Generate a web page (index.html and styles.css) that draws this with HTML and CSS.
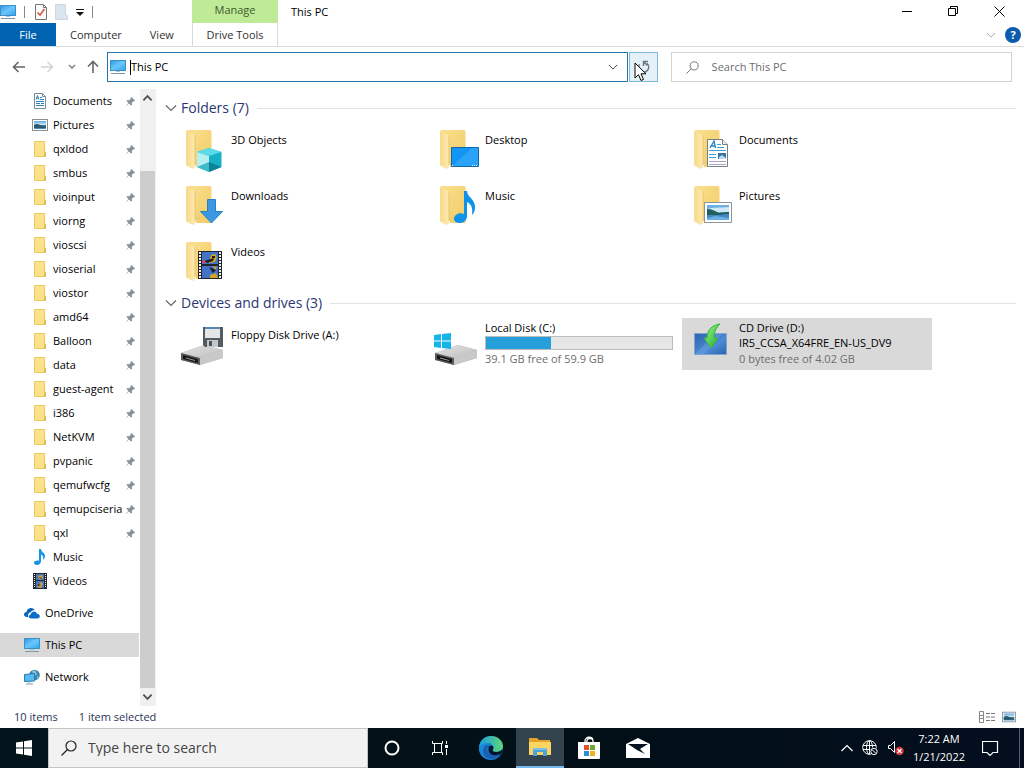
FILE: index.html
```html
<!DOCTYPE html>
<html lang="en">
<head>
    <meta charset="UTF-8">
    <meta name="viewport" content="width=device-width, initial-scale=1.0">
    <title>This PC</title>
    <link rel="stylesheet" href="styles.css">
</head>
<body>
    <svg class="sprite" aria-hidden="true">
        <defs>
            <linearGradient id="screen" x1="0" y1="0" x2="1" y2="1">
                <stop offset="0" stop-color="#2b9ae6"/><stop offset=".5" stop-color="#6cc6fb"/><stop offset="1" stop-color="#2ba4f0"/>
            </linearGradient>
            <linearGradient id="yellow" x1="0" y1="0" x2="1" y2="1">
                <stop offset="0" stop-color="#fbe08e"/><stop offset="1" stop-color="#f1cb68"/>
            </linearGradient>
            <linearGradient id="flap" x1="0" y1="0" x2="1" y2="0">
                <stop offset="0" stop-color="#f7da88"/><stop offset="1" stop-color="#fdeab4"/>
            </linearGradient>
            <linearGradient id="photo" x1="0" y1="0" x2="0" y2="1">
                <stop offset="0" stop-color="#5ba6e0"/><stop offset=".5" stop-color="#d9effa"/><stop offset=".55" stop-color="#3d7480"/><stop offset="1" stop-color="#4d94c8"/>
            </linearGradient>
            <linearGradient id="metal" x1="0" y1="0" x2="1" y2="1">
                <stop offset="0" stop-color="#e4e4e4"/><stop offset="1" stop-color="#bdbdbd"/>
            </linearGradient>
            <linearGradient id="edgeTop" x1="0" y1="0" x2="1" y2="0">
                <stop offset="0" stop-color="#1c9de0"/><stop offset="1" stop-color="#5ed67a"/>
            </linearGradient>
            <linearGradient id="cdBox" x1="0" y1="0" x2="1" y2="1">
                <stop offset="0" stop-color="#2d62b0"/><stop offset=".6" stop-color="#4c8bd4"/><stop offset="1" stop-color="#2a62ae"/>
            </linearGradient>
            <linearGradient id="green" x1="0" y1="0" x2="1" y2="1">
                <stop offset="0" stop-color="#a5f58f"/><stop offset="1" stop-color="#17ad2a"/>
            </linearGradient>
        </defs>
        <symbol id="pc" viewBox="0 0 16 16">
            <rect x=".5" y="1.5" width="15" height="10" fill="url(#screen)" stroke="#3d8fc4"/>
            <path d="M6 12h4v1H6z" fill="#9dc8e4"/>
            <path d="M1 14.5h14" stroke="#7b97a8"/>
        </symbol>
        <symbol id="folder" viewBox="0 0 16 16">
            <path d="M2.5.5h10v10l1 1v4h-11z" fill="#fde08a" stroke="#ecc95f"/>
            <path d="M12 10v5.500h2V11z" fill="#e3b94e"/>
        </symbol>
        <symbol id="pin" viewBox="0 0 12 12">
            <path d="M7 1l4 4-1 1-.8-.3L7.500 7.500l.2 2-1 1-2.400-2.400L1 11l-.2-.2L3.700 7.500 1.500 5.300l1-1 2 .2 1.800-1.700L6 2z" fill="#87939a"/>
        </symbol>
        <symbol id="doc" viewBox="0 0 16 16">
            <path d="M2.500.5h8l3 3v12h-11z" fill="#fff" stroke="#7e8a92"/>
            <path d="M10.500.5v3h3" fill="none" stroke="#7e8a92"/>
            <path d="M4 6.500l1.500-4L7 6.500M4.500 5h2M8 4.500h2M8 6.500h4M4 8.500h8M4 10.500h4M9 10.500h3M4 12.500h8" fill="none" stroke="#2b82bd"/>
        </symbol>
        <symbol id="pic" viewBox="0 0 16 16">
            <rect x=".5" y="2.500" width="15" height="11" fill="#fff" stroke="#8a9096"/>
            <rect x="2" y="4" width="12" height="8" fill="url(#photo)"/>
            <path d="M2 8c3-2 5-1 7 1l5 1v1H2z" fill="#28576f"/>
        </symbol>
        <symbol id="note" viewBox="0 0 16 16">
            <path d="M7 0h2c0 3 4 4 4 7 0 2-1 3-2 4 1-4-1-5-2-5.500V12c0 2-1.500 4-4 4-2 0-3-1-3-2.200C2 12 5 11 7 11.800z" fill="#1593e6"/>
        </symbol>
        <symbol id="film" viewBox="0 0 16 16">
            <path d="M1 0h14v16H1z" fill="#262a30"/>
            <path d="M4 1h8v6H4zM4 8h8v7H4z" fill="#4b78bb"/>
            <path d="M6 3l4-1 1 3-3 2zM5 14l4-5 2 2-2 4z" fill="#c9a13a"/>
            <path d="M7 4l3 1-1 1zM6 11l3 1-3 1z" fill="#2c2c30"/>
            <path d="M2.500 1v14M13.500 1v14" stroke="#e6e6e6" stroke-dasharray="1 1"/>
        </symbol>
        <symbol id="cloud" viewBox="0 0 16 16">
            <path d="M3 12C1 12 0 11 0 9.500S1 7 2.500 7C3 4 5 3 7 3c2 0 3 1 3.600 2C9 5 7 6 6.500 7.500 4.500 7.500 3.500 10 4.500 12z" fill="#0a64b8"/>
            <path d="M7 13.500c-2.500 0-3-3.500-.2-4.300C7.500 6 12 5.500 13 8.800c3.500 0 3.800 4.700.5 4.700z" fill="#0a6fc9"/>
        </symbol>
        <symbol id="net" viewBox="0 0 16 16">
            <circle cx="10.500" cy="6" r="5.300" fill="#3a86ac"/>
            <path d="M8 1l4 1 1 4-4 1zM13 7l2 1-2 2z" fill="#86bfcf"/>
            <path d="M.5 5.500l10-1v7.500l-10 .5z" fill="#58baf2" stroke="#277db6"/>
            <path d="M5 12v2M2 15h7" stroke="#7d99a8"/>
        </symbol>
        <symbol id="folder-big" viewBox="0 0 48 48">
            <path d="M7 5h23q1.500 0 1.500 1.500V42H16z" fill="url(#yellow)"/>
            <path d="M6 5.500l9 4.500v31.500q0 3-3 2L7 41q-1-.5-1-2z" fill="url(#flap)"/>
            <path d="M15 10v30M15 38h4v-4" fill="none" stroke="#e8c56c"/>
        </symbol>
        <symbol id="drive" viewBox="0 0 48 48">
            <path d="M1 33l23-8 19 5v8L20 45 1 40z" fill="#aaa"/>
            <path d="M1 33l23-8 19 5-23 8z" fill="url(#metal)"/>
            <path d="M20 38l23-8v8l-23 7z" fill="#c9c9c9"/>
            <path d="M1 33l19 5v7L1 40z" fill="#5c5c5c"/>
            <path d="M3 35l15 4v4L3 39z" fill="#161616"/>
            <path d="M6 38l9 2.500" stroke="#999"/>
        </symbol>
        <symbol id="chev" viewBox="0 0 12 8">
            <path d="M1 1.500L6 6.500l5-5" fill="none" stroke="currentColor" stroke-width="1.200"/>
        </symbol>
        <symbol id="lens" viewBox="0 0 16 16">
            <circle cx="10" cy="6" r="5" fill="none" stroke="currentColor" stroke-width="1.200"/>
            <path d="M6.500 9.500L.5 15.500" stroke="currentColor" stroke-width="1.200"/>
        </symbol>
    </svg>

    <header class="ribbon">
        <div class="quick">
            <svg class="icon"><use href="#pc"/></svg>
            <span class="sep"></span>
            <button class="plain" aria-label="Properties"><svg width="12" height="16" viewBox="0 0 12 16"><path d="M.5.5h8l3 3v12H.5z" fill="#fbfbfb" stroke="#777"/><path d="M8.500.5v3h3" fill="none" stroke="#777"/><path d="M2.500 8.500L5 11l4.500-6" fill="none" stroke="#d8553e" stroke-width="1.600"/></svg></button>
            <button class="plain" aria-label="New folder"><svg width="13" height="16" viewBox="0 0 13 16"><path d="M.5.5h10v10l2 1v4H.5z" fill="#dbe5ee" stroke="#ccd7e1"/></svg></button>
            <button class="plain" aria-label="Customize toolbar"><svg width="8" height="8" viewBox="0 0 8 8"><path d="M0 1h8v1H0zM0 4h8L4 8z" fill="#111"/></svg></button>
            <span class="sep"></span>
        </div>
        <div class="manage">Manage</div>
        <div class="title">
            <span>This PC</span>
            <div class="controls">
                <button class="plain" aria-label="Minimize"><svg width="11" height="11"><path d="M0 5.500h10" stroke="#000"/></svg></button>
                <button class="plain" aria-label="Restore"><svg width="11" height="11"><path d="M.5 2.500h7v7h-7zM2.500 2V.5h7v7H8" fill="none" stroke="#000"/></svg></button>
                <button class="plain" aria-label="Close"><svg width="11" height="11"><path d="M.5.5l10 10M10.500.5l-10 10" stroke="#000"/></svg></button>
            </div>
        </div>
        <nav class="tabs">
            <button class="tab file">File</button>
            <button class="tab">Computer</button>
            <button class="tab">View</button>
        </nav>
        <button class="tab drive-tools">Drive Tools</button>
        <div class="help">
            <button class="plain" aria-label="Expand ribbon"><svg width="10" height="8"><use href="#chev"/></svg></button>
            <button class="help-button" aria-label="Help">?</button>
        </div>
    </header>

    <div class="navbar">
        <div class="arrows">
            <button class="plain" aria-label="Back"><svg width="14" height="12"><path d="M13 6H1.500M6.500 1l-5 5 5 5" fill="none" stroke="#666" stroke-width="1.600"/></svg></button>
            <button class="plain" aria-label="Forward"><svg width="14" height="12"><path d="M1 6h11.500M7.500 1l5 5-5 5" fill="none" stroke="#d2d2d2" stroke-width="1.400"/></svg></button>
            <button class="plain recent" aria-label="Recent locations"><svg width="8" height="6" viewBox="0 0 8 6"><path d="M1 1l3 3 3-3" fill="none" stroke="#888" stroke-width="1.600"/></svg></button>
            <button class="plain" aria-label="Up"><svg width="12" height="14"><path d="M6 13V1.500M1 6.500l5-5 5 5" fill="none" stroke="#666" stroke-width="1.600"/></svg></button>
        </div>
        <div class="address">
            <svg class="icon"><use href="#pc"/></svg>
            <span class="caret"></span>
            <input type="text" value="This PC" aria-label="Address">
            <button class="plain" aria-label="Previous locations"><svg width="10" height="8"><use href="#chev"/></svg></button>
        </div>
        <button class="refresh" aria-label="Refresh">
            <svg width="14" height="14"><path d="M11 3.300a5 5 0 1 1-7.500 1M7.500 6V1.500h4.500M7.500 1.500l4 4" fill="none" stroke="#6a7a84" stroke-width="1.500"/></svg>
            <svg class="cursor" width="13" height="20" viewBox="0 0 13 20"><path d="M1 1v15l3.500-3.300L7 18.500l2.500-1.100L7 11.800h5z" fill="#fff" stroke="#000"/></svg>
        </button>
        <div class="search">
            <svg width="13" height="13"><use href="#lens"/></svg>
            <input type="text" placeholder="Search This PC" aria-label="Search This PC">
        </div>
    </div>

    <div class="content">
        <nav class="sidebar">
            <div class="tree">
                <a href="#" class="pinned"><svg class="icon"><use href="#doc"/></svg><span>Documents</span><svg class="pin"><use href="#pin"/></svg></a>
                <a href="#" class="pinned"><svg class="icon"><use href="#pic"/></svg><span>Pictures</span><svg class="pin"><use href="#pin"/></svg></a>
                <a href="#" class="pinned"><svg class="icon"><use href="#folder"/></svg><span>qxldod</span><svg class="pin"><use href="#pin"/></svg></a>
                <a href="#" class="pinned"><svg class="icon"><use href="#folder"/></svg><span>smbus</span><svg class="pin"><use href="#pin"/></svg></a>
                <a href="#" class="pinned"><svg class="icon"><use href="#folder"/></svg><span>vioinput</span><svg class="pin"><use href="#pin"/></svg></a>
                <a href="#" class="pinned"><svg class="icon"><use href="#folder"/></svg><span>viorng</span><svg class="pin"><use href="#pin"/></svg></a>
                <a href="#" class="pinned"><svg class="icon"><use href="#folder"/></svg><span>vioscsi</span><svg class="pin"><use href="#pin"/></svg></a>
                <a href="#" class="pinned"><svg class="icon"><use href="#folder"/></svg><span>vioserial</span><svg class="pin"><use href="#pin"/></svg></a>
                <a href="#" class="pinned"><svg class="icon"><use href="#folder"/></svg><span>viostor</span><svg class="pin"><use href="#pin"/></svg></a>
                <a href="#" class="pinned"><svg class="icon"><use href="#folder"/></svg><span>amd64</span><svg class="pin"><use href="#pin"/></svg></a>
                <a href="#" class="pinned"><svg class="icon"><use href="#folder"/></svg><span>Balloon</span><svg class="pin"><use href="#pin"/></svg></a>
                <a href="#" class="pinned"><svg class="icon"><use href="#folder"/></svg><span>data</span><svg class="pin"><use href="#pin"/></svg></a>
                <a href="#" class="pinned"><svg class="icon"><use href="#folder"/></svg><span>guest-agent</span><svg class="pin"><use href="#pin"/></svg></a>
                <a href="#" class="pinned"><svg class="icon"><use href="#folder"/></svg><span>i386</span><svg class="pin"><use href="#pin"/></svg></a>
                <a href="#" class="pinned"><svg class="icon"><use href="#folder"/></svg><span>NetKVM</span><svg class="pin"><use href="#pin"/></svg></a>
                <a href="#" class="pinned"><svg class="icon"><use href="#folder"/></svg><span>pvpanic</span><svg class="pin"><use href="#pin"/></svg></a>
                <a href="#" class="pinned"><svg class="icon"><use href="#folder"/></svg><span>qemufwcfg</span><svg class="pin"><use href="#pin"/></svg></a>
                <a href="#" class="pinned"><svg class="icon"><use href="#folder"/></svg><span>qemupciseria</span><svg class="pin"><use href="#pin"/></svg></a>
                <a href="#" class="pinned"><svg class="icon"><use href="#folder"/></svg><span>qxl</span><svg class="pin"><use href="#pin"/></svg></a>
                <a href="#" class="pinned"><svg class="icon"><use href="#note"/></svg><span>Music</span></a>
                <a href="#" class="pinned"><svg class="icon"><use href="#film"/></svg><span>Videos</span></a>
                <a href="#" class="root"><svg class="icon"><use href="#cloud"/></svg><span>OneDrive</span></a>
                <a href="#" class="root selected"><svg class="icon"><use href="#pc"/></svg><span>This PC</span></a>
                <a href="#" class="root"><svg class="icon"><use href="#net"/></svg><span>Network</span></a>
            </div>
            <div class="scrollbar">
                <button class="plain" aria-label="Scroll up"><svg class="up" width="11" height="8" viewBox="0 0 12 8"><path d="M1.500 1.500L6 6l4.500-4.500" fill="none" stroke="#505050" stroke-width="2"/></svg></button>
                <div class="track"><div class="thumb"></div></div>
                <button class="plain" aria-label="Scroll down"><svg width="11" height="8" viewBox="0 0 12 8"><path d="M1.500 1.500L6 6l4.500-4.500" fill="none" stroke="#505050" stroke-width="2"/></svg></button>
            </div>
        </nav>

        <main class="files">
            <h2><svg width="12" height="8"><use href="#chev"/></svg>Folders (7)</h2>
            <div class="tiles">
                <a href="#" class="tile">
                    <svg viewBox="0 0 48 48"><use href="#folder-big"/><path d="M29 23l12.500 4v15L29 47l-12-5V27z" fill="#17b1c7"/><path d="M29 23l12.500 4L29 31l-12-4z" fill="#5adbe8"/><path d="M17 27l12 4v16l-12-5z" fill="#b4eff2"/><path d="M17 42l12-5v10z" fill="#3fbac8"/><path d="M29 37l12.500 5L29 47z" fill="#0c8397"/></svg>
                    <div class="info"><span>3D Objects</span></div>
                </a>
                <a href="#" class="tile">
                    <svg viewBox="0 0 48 48"><use href="#folder-big"/><path d="M17.500 22.500h27v19h-27z" fill="#1296f5" stroke="#1267a8"/><path d="M18 41L38 23h6v18z" fill="#2aa3f8"/><path d="M18 40.500h2M38 40.500h5" stroke="#e7f4ff" stroke-dasharray="1 1"/></svg>
                    <div class="info"><span>Desktop</span></div>
                </a>
                <a href="#" class="tile">
                    <svg viewBox="0 0 48 48"><use href="#folder-big"/><path d="M19.500 14.500h15l5 5v22h-20z" fill="#fff" stroke="#777f86"/><path d="M34.500 14.500v5h5" fill="#eee" stroke="#777f86"/><path d="M22 23l4-7 1.500 7M23.500 21h4" fill="none" stroke="#2387c4" stroke-width="1.300"/><path d="M29 19.500h4M29 22.500h7M21 25.500h17M21 29.500h7M21 32.500h7" stroke="#3b9fd0"/><path d="M21 36.500h17M21 39.500h17" stroke="#a8a4c8"/><path d="M30 28h8v6h-8z" fill="#3972a4"/><path d="M31 32l3-2 4 3v1h-7z" fill="#b8dced"/></svg>
                    <div class="info"><span>Documents</span></div>
                </a>
                <a href="#" class="tile">
                    <svg viewBox="0 0 48 48"><use href="#folder-big"/><path d="M27.500 18.500h8v12h7L31.500 42 20.500 30.500h7z" fill="#3c98e2" stroke="#2780c4"/></svg>
                    <div class="info"><span>Downloads</span></div>
                </a>
                <a href="#" class="tile">
                    <svg viewBox="0 0 48 48"><use href="#folder-big"/><path d="M30 10h3c0 6 8 8 8 16 0 4-1 6-3 8 1-8-1-11-5-13v14c0 4-3 7-7 7-3 0-6-1.500-6-4 0-4 5-7 10-5z" fill="#0f93ea"/></svg>
                    <div class="info"><span>Music</span></div>
                </a>
                <a href="#" class="tile">
                    <svg viewBox="0 0 48 48"><use href="#folder-big"/><path d="M16.500 21.500h27v20h-27z" fill="#fff" stroke="#8a949b"/><path d="M19 24h22v15H19z" fill="#6fb0e4"/><path d="M19 28c6-2 12-1 22-2v5H19z" fill="#cfe8f7"/><path d="M19 28c5 0 8 2 12 4 4-1 7-1 10-1v2c-8 1-15 2-22 1z" fill="#23605c"/><path d="M19 34c7 1 14 0 22-1v6H19z" fill="#3f86c4"/><path d="M19 37l9-2 13 2v2H19z" fill="#69aee4"/></svg>
                    <div class="info"><span>Pictures</span></div>
                </a>
                <a href="#" class="tile">
                    <svg viewBox="0 0 48 48"><use href="#folder-big"/><path d="M18 14h24v28H18z" fill="#23252b"/><path d="M22 15h16v12H22zM22 29h16v12H22z" fill="#4472c8"/><path d="M31 18l4-1 2 3-2 5-6 1zM30 38l6-2 2 5h-8zM33 29l4 1-2 3z" fill="#d5a521"/><path d="M24 24l10-3-1 3-6 2zM29 30l7 3-3 3zM32 19h3v2h-3z" fill="#1d1d22"/><path d="M22 24l3-1 1 3h-4z" fill="#c84a5a"/><path d="M20 15v27M40 15v27" stroke="#f1f1f1" stroke-width="2" stroke-dasharray="2 1"/></svg>
                    <div class="info"><span>Videos</span></div>
                </a>
            </div>

            <h2><svg width="12" height="8"><use href="#chev"/></svg>Devices and drives (3)</h2>
            <div class="tiles">
                <a href="#" class="tile">
                    <svg viewBox="0 0 48 48"><use href="#drive"/><path d="M23 7h20v20H25l-2-2z" fill="#535b63"/><path d="M25 8h15v10H25z" fill="#e4e6e8"/><path d="M25 7h15v2H25z" fill="#5a87b2"/><path d="M27 20h11v7H27z" fill="#c3c7cb"/><path d="M29 21h3v5h-3z" fill="#4b5259"/></svg>
                    <div class="info"><span>Floppy Disk Drive (A:)</span></div>
                </a>
                <a href="#" class="tile">
                    <svg viewBox="0 0 48 48"><use href="#drive"/><path d="M0 15l7-1v6.500H0zM8 14l9-1v7.500H8zM0 21.500h7V28l-7-1zM8 21.500h9V29l-9-1z" fill="#15b5e8"/></svg>
                    <div class="info full">
                        <span>Local Disk (C:)</span>
                        <div class="bar"><div class="used" style="width: 35%"></div></div>
                        <span class="gray">39.1 GB free of 59.9 GB</span>
                    </div>
                </a>
                <a href="#" class="tile selected">
                    <svg viewBox="0 0 48 48"><path d="M6.500 13.500h32v21h-32z" fill="url(#cdBox)" stroke="#7ea4cf"/><path d="M7 34l20-20h7L16 34z" fill="#75aae4" opacity=".4"/><path d="M32 4c-8 1-13 6-13 14h-3l7 10 7-10h-4c0-6 2-10 6-14z" fill="url(#green)" stroke="#37b53c"/></svg>
                    <div class="info full">
                        <span>CD Drive (D:)</span>
                        <span>IR5_CCSA_X64FRE_EN-US_DV9</span>
                        <span class="gray">0 bytes free of 4.02 GB</span>
                    </div>
                </a>
            </div>
        </main>
    </div>

    <footer class="status">
        <span>10 items</span>
        <span>1 item selected</span>
        <div class="views">
            <button class="plain" aria-label="Details view"><svg width="16" height="12"><path d="M.5.5h4v11h-4zM0 4.500h5M0 7.500h5" fill="none" stroke="#888"/><path d="M7 2.500h9M7 6h9M7 9.500h9" stroke="#777" stroke-dasharray="4 1"/></svg></button>
            <button class="plain" aria-label="Large icons view"><svg width="14" height="14"><use href="#pic"/></svg></button>
        </div>
    </footer>

    <div class="taskbar">
        <button class="task" aria-label="Start"><svg width="16" height="16"><path d="M0 2.500l7-1v6H0zM8 1.300L16 0v7.500H8zM0 8.500h7v6l-7-1zM8 8.500h8V16l-8-1.300z" fill="#fff"/></svg></button>
        <div class="task-search">
            <svg width="16" height="16"><use href="#lens"/></svg>
            <input type="text" placeholder="Type here to search" aria-label="Type here to search">
        </div>
        <button class="task" aria-label="Cortana"><svg width="16" height="16"><circle cx="8" cy="8" r="6.500" fill="none" stroke="#fff" stroke-width="2"/></svg></button>
        <button class="task" aria-label="Task View"><svg width="17" height="16"><path d="M.5 1v2.500h10V1M2.500 3.500v9M9.500 3.500v9M.5 15v-2.500h10V15M14.500 1v3M14.500 9v6" fill="none" stroke="#fff"/><path d="M13 5h3v3h-3z" fill="#fff"/></svg></button>
        <div class="apps">
            <button class="task" aria-label="Edge"><svg width="26" height="26" viewBox="0 0 26 26"><circle cx="13" cy="13" r="12" fill="#1673c7"/><path d="M1 14C1 5 7 1 13 1c7 0 12 5 12 10 0 4-3 6-7 6-3 0-4-1-3-2 2-3 0-6-4-6-5 0-9 2-10 5z" fill="url(#edgeTop)"/><path d="M1.500 12C4 8 11 7 14 9c-4 0-6 3-5 7 1 5 6 7 12 5-5 6-18 5-20-6z" fill="#1688d6"/><path d="M12 11c2-1 4 0 3 3-1 2 0 3 3 3s5-1 6.500-3c0 3-1 5-3 6.500-5 1.500-11-1-11-6 0-2 0-3 1.500-3.500z" fill="#06162a"/><path d="M9 14c0 6 7 8 13 5-3 6-9 6-13 4-5-3-5-10-1-13 1 0 2 0 3 .5-1 .5-2 1.500-2 3.500z" fill="#1b5fb4"/></svg></button>
            <button class="task active" aria-label="File Explorer"><svg width="24" height="20" viewBox="0 0 24 20"><path d="M1 1h8l2 2h11v15H1z" fill="#e4a42b"/><path d="M1 5h22v13H1z" fill="#fcd462"/><path d="M5 11h14v8h-4v-4H9v4H5z" fill="#4aa3d9"/><path d="M5 11h14v2H5z" fill="#7cc0e4"/></svg></button>
            <button class="task" aria-label="Microsoft Store"><svg width="24" height="24" viewBox="0 0 24 24"><path d="M8 7V5c0-5 8-5 8 0v2M10 6V4c1-2 5-2 6 0" fill="none" stroke="#fff" stroke-width="1.300"/><path d="M1 6h22v16q0 1-1 1H2q-1 0-1-1z" fill="#fff"/><path d="M7 9h5v5H7z" fill="#e4502c"/><path d="M13 9h5v5h-5z" fill="#70a72c"/><path d="M7 15h5v5H7z" fill="#2a8fd0"/><path d="M13 15h5v5h-5z" fill="#f1b51c"/></svg></button>
            <button class="task" aria-label="Mail"><svg width="24" height="20" viewBox="0 0 24 20"><path d="M0 6l12-6 12 6v14H0z" fill="#fff"/><path d="M2 6h20l-8 5 5 5-8-4z" fill="#051420"/></svg></button>
        </div>
        <div class="tray">
            <button class="plain" aria-label="Show hidden icons"><svg width="12" height="8" viewBox="0 0 12 8"><path d="M.5 7L6 1.500 11.500 7" fill="none" stroke="#fff" stroke-width="1.200"/></svg></button>
            <button class="plain" aria-label="Network: not connected"><svg width="17" height="16" viewBox="0 0 17 16"><g fill="none" stroke="#fff"><circle cx="7.500" cy="7.500" r="6.800"/><ellipse cx="7.500" cy="7.500" rx="3" ry="6.800"/><path d="M1 5.500h13M1 9.500h8M7.500 1v13"/></g><circle cx="12" cy="11.500" r="4.200" fill="#040e1c"/><circle cx="12" cy="11.500" r="3.200" fill="none" stroke="#fff"/><path d="M10 9.500l4 4" stroke="#fff"/></svg></button>
            <button class="plain" aria-label="Volume: unavailable"><svg width="16" height="16" viewBox="0 0 16 16"><path d="M.5 5.500h2l4-4v11l-4-4h-2z" fill="none" stroke="#fff"/><circle cx="11.500" cy="11" r="4.300" fill="#d0343c"/><path d="M9.500 9l4 4M13.500 9l-4 4" stroke="#fff" stroke-width="1.200"/></svg></button>
            <div class="clock"><span>7:22 AM</span><span>1/21/2022</span></div>
            <button class="plain" aria-label="Notifications"><svg width="17" height="17" viewBox="0 0 17 17"><path d="M.5 1.500h15v11H11l-3 3-3-3H.5z" fill="none" stroke="#fff" stroke-width="1.200"/></svg></button>
        </div>
        <button class="show-desktop" aria-label="Show desktop"></button>
    </div>
</body>
</html>
```
FILE: styles.css
```css
* {
    box-sizing: border-box;
}
body {
    margin: 0;
    height: 100vh;
    display: flex;
    flex-direction: column;
    overflow: hidden;
    background: #fff;
    color: #000;
    font-family: "Open Sans", "Noto Sans", sans-serif;
    font-size: 11px;
    line-height: 16px;
}
button, input {
    font: inherit;
    color: inherit;
}
a {
    color: inherit;
    text-decoration: none;
}
svg {
    display: block;
    flex-shrink: 0;
}
.sprite {
    position: absolute;
    width: 0;
    height: 0;
}
.icon {
    width: 16px;
    height: 16px;
}
.plain {
    display: flex;
    align-items: center;
    justify-content: center;
    padding: 0;
    border: 0;
    background: none;
}

/* title bar and ribbon tabs */
.ribbon {
    display: grid;
    grid-template-columns: 192px 86px 1fr;
    grid-template-rows: 23px 23px;
    border-bottom: 1px solid #dadbdc;
}
.quick {
    display: flex;
    align-items: center;
    gap: 8px;
}
.quick .sep {
    width: 1px;
    height: 12px;
    background: #888;
}
.quick .sep + .plain {
    margin-left: 2px;
}
.manage {
    background: #bfea98;
    color: #3e5a2c;
    text-align: center;
    line-height: 20px;
}
.title {
    display: flex;
    justify-content: space-between;
    align-items: center;
    padding: 0 2px 0 13px;
}
.controls {
    display: flex;
}
.controls .plain {
    width: 46px;
    height: 22px;
}
.tabs {
    display: flex;
}
.tab {
    border: 0;
    padding: 0 14px;
    background: none;
    color: #333;
}
.tab.file {
    width: 56px;
    background: #0063b1;
    color: #fff;
}
.drive-tools {
    padding: 0;
    border-left: 1px solid #dadbdc;
    border-right: 1px solid #dadbdc;
}
.help {
    display: flex;
    justify-content: flex-end;
    align-items: center;
    gap: 9px;
    padding-right: 3px;
    color: #aaa;
}
.help-button {
    width: 16px;
    height: 16px;
    padding: 0;
    border: 0;
    border-radius: 50%;
    background: #0b5cad;
    color: #fff;
    font-weight: bold;
}

/* address row */
.navbar {
    display: flex;
    height: 42px;
    padding: 5px 12px 7px 0;
}
.arrows {
    width: 107px;
    display: flex;
    align-items: center;
    gap: 14px;
    padding-left: 12px;
}
.arrows .recent {
    margin-right: -3px;
}
.address {
    flex: 39;
    display: flex;
    align-items: center;
    padding: 0 9px 0 2px;
    border: 1px solid #2474a8;
}
.address .plain {
    color: #444;
}
.address input, .search input, .task-search input {
    flex: 1;
    min-width: 0;
    border: 0;
    padding: 0;
    outline: 0;
    background: none;
}
.caret {
    width: 1px;
    height: 15px;
    margin-left: 4px;
    background: #000;
}
.refresh {
    position: relative;
    width: 29px;
    margin: 0 13px 0 1px;
    padding: 0 0 0 6px;
    border: 1px solid #7fb8dc;
    background: #e5f1f9;
}
.cursor {
    position: absolute;
    left: 4px;
    top: 9px;
}
.search {
    flex: 25;
    display: flex;
    align-items: center;
    gap: 13px;
    padding-left: 14px;
    border: 1px solid #d4d4d4;
    color: #777;
}
.search input::placeholder {
    color: #6d6d6d;
}

/* navigation pane */
.content {
    flex: 1;
    min-height: 0;
    display: flex;
}
.sidebar {
    display: flex;
    width: 156px;
    border-right: 1px solid #f0f0f0;
}
.tree {
    flex: 1;
    min-width: 0;
    overflow: hidden;
}
.tree a {
    display: flex;
    align-items: center;
    height: 24px;
    padding-right: 4px;
}
.tree span {
    flex: 1;
    overflow: hidden;
    white-space: nowrap;
}
.pinned {
    gap: 5px;
    padding-left: 32px;
}
.pinned .pin {
    width: 11px;
    height: 11px;
    margin-left: -4px;
}
.root {
    gap: 5px;
    margin-top: 8px;
    margin-right: 1px;
    padding-left: 24px;
}
.tree .selected {
    background: #d9d9d9;
}
.scrollbar {
    display: flex;
    flex-direction: column;
    width: 15px;
    background: #f0f0f0;
}
.scrollbar .plain {
    height: 18px;
}
.scrollbar .up {
    transform: rotate(180deg);
}
.track {
    flex: 1;
    display: flex;
    align-items: flex-end;
}
.thumb {
    width: 100%;
    height: 89%;
    background: #cdcdcd;
}

/* file area */
.files {
    flex: 1;
    padding: 5px 8px 0 9px;
}
.files h2 {
    display: flex;
    align-items: center;
    gap: 4px;
    height: 28px;
    margin: 0;
    color: #2b3673;
    font-size: 14px;
    font-weight: normal;
}
.files h2 svg {
    color: #666;
}
.files h2::after {
    content: "";
    flex: 1;
    height: 1px;
    margin-left: 4px;
    background: #e2e2e2;
}
.tiles {
    display: grid;
    grid-template-columns: repeat(auto-fill, 250px);
    gap: 4px;
    padding: 1px 0 2px 9px;
}
.tile {
    display: flex;
    gap: 3px;
    height: 52px;
    padding: 2px 5px 2px 6px;
}
.tile.selected {
    background: #d9d9d9;
}
.tile > svg {
    width: 48px;
    height: 48px;
}
.info {
    flex: 1;
    display: flex;
    flex-direction: column;
    padding-top: 7px;
}
.info.full {
    padding-top: 0;
    line-height: 15px;
    white-space: nowrap;
}
.info .gray {
    color: #6d6d6d;
    line-height: 17px;
}
.bar {
    height: 14px;
    margin-top: 1px;
    border: 1px solid #bcbcbc;
    background: #e6e6e6;
}
.used {
    height: 100%;
    background: #26a0da;
}

/* status bar */
.status {
    display: flex;
    align-items: center;
    gap: 21px;
    height: 22px;
    padding: 0 8px 0 14px;
    color: #2a3555;
}
.views {
    display: flex;
    gap: 7px;
    margin-left: auto;
}

/* taskbar */
.taskbar {
    display: flex;
    height: 40px;
    background: linear-gradient(90deg, #03131b, #020f17 60%, #040e1f);
    color: #fff;
}
.task {
    display: flex;
    align-items: center;
    justify-content: center;
    width: 48px;
    padding: 0;
    border: 0;
    background: none;
}
.task.active {
    background: #33444f;
    border-bottom: 2px solid #76b9ed;
}
.task-search {
    display: flex;
    align-items: center;
    gap: 11px;
    width: 320px;
    padding-left: 12px;
    border: 1px solid #c4c4c4;
    background: #f2f2f2;
    color: #222;
    font-size: 14px;
}
.task-search input::placeholder {
    color: #444;
}
.apps {
    display: flex;
    gap: 1px;
    margin-left: 3px;
}
.tray {
    display: flex;
    align-items: center;
    gap: 9px;
    margin-left: auto;
}
.clock {
    display: flex;
    flex-direction: column;
    align-items: center;
    line-height: 18px;
}
.tray .clock + .plain {
    margin: 0 20px 0 8px;
}
.show-desktop {
    width: 5px;
    padding: 0;
    border: 0;
    border-left: 1px solid #56616c;
    background: none;
}
```
